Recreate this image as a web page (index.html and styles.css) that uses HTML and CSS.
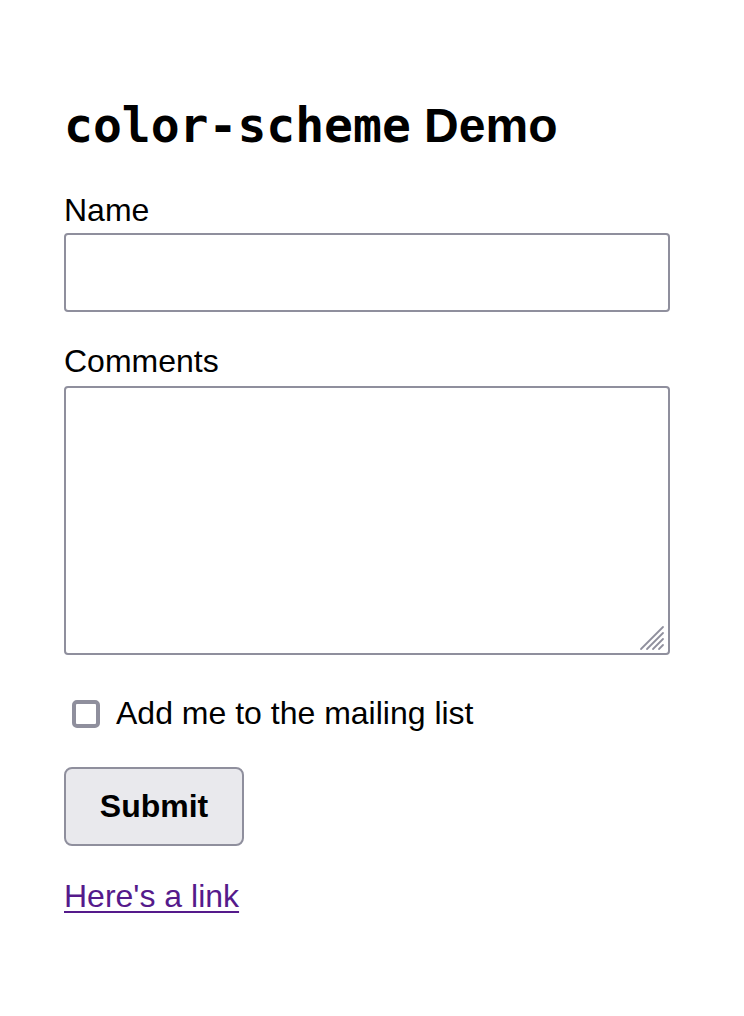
FILE: index.html
```html
<!DOCTYPE html>
<html lang="en">
<head>
<meta charset="utf-8">
<title>color-scheme Demo</title>
<link rel="stylesheet" href="styles.css">
</head>
<body>
<main class="page">
  <h1 class="title"><code class="code">color-scheme</code> Demo</h1>
  <form class="form">
    <label class="label label-name" for="name">Name</label>
    <input class="field" id="name" type="text">
    <label class="label label-comments" for="comments">Comments</label>
    <div class="area-wrap">
      <textarea class="area" id="comments"></textarea>
      <svg class="grip" width="28" height="28" viewBox="0 0 28 28" aria-hidden="true">
        <g stroke="#8f8f9d" stroke-width="1.8" stroke-linecap="round">
          <line x1="26" y1="4" x2="4" y2="26"/>
          <line x1="26" y1="10" x2="10" y2="26"/>
          <line x1="26" y1="16" x2="16" y2="26"/>
          <line x1="26" y1="22" x2="22" y2="26"/>
        </g>
      </svg>
    </div>
    <label class="check-row">
      <input class="check" type="checkbox">
      <span>Add me to the mailing list</span>
    </label>
    <button class="btn" type="button">Submit</button>
    <p class="link-row"><a class="link" href="#">Here's a link</a></p>
  </form>
</main>
</body>
</html>
```
FILE: styles.css
```css
html, body {
  margin: 0;
  padding: 0;
  background: #ffffff;
  color: #000000;
}
body {
  font-family: "Liberation Sans", Arial, sans-serif;
  font-size: 32px;
  line-height: 37px;
}
.page {
  width: 606px;
  padding-left: 64px;
}
.title {
  margin: 97px 0 0;
  font-size: 48px;
  line-height: 56px;
  font-weight: 700;
}
.code {
  font-family: "DejaVu Sans Mono", "Liberation Mono", monospace;
  font-size: 48px;
  font-weight: 700;
}
.form {
  display: flex;
  flex-direction: column;
}
.label {
  display: block;
}
.label-name {
  margin-top: 38px;
}
.field {
  box-sizing: border-box;
  width: 606px;
  height: 79px;
  margin: 4px 0 0;
  border: 2px solid #8f8f9d;
  border-radius: 4px;
  background: #ffffff;
  font: inherit;
  padding: 0 8px;
}
.label-comments {
  margin-top: 31px;
}
.area-wrap {
  position: relative;
  margin-top: 6px;
  width: 606px;
  height: 269px;
}
.area {
  box-sizing: border-box;
  display: block;
  width: 606px;
  height: 269px;
  margin: 0;
  border: 2px solid #8f8f9d;
  border-radius: 4px;
  background: #ffffff;
  resize: none;
  font: inherit;
}
.grip {
  position: absolute;
  right: 5px;
  bottom: 4px;
}
.check-row {
  display: flex;
  align-items: center;
  height: 37px;
  margin-top: 40px;
}
.check {
  appearance: none;
  -webkit-appearance: none;
  box-sizing: border-box;
  width: 28px;
  height: 28px;
  margin: 0 16px 0 8px;
  border: 4px solid #8f8f9d;
  border-radius: 5px;
  background: #ffffff;
}
.btn {
  box-sizing: border-box;
  align-self: flex-start;
  width: 180px;
  height: 79px;
  margin-top: 35px;
  padding: 0;
  border: 2px solid #8f8f9d;
  border-radius: 8px;
  background: #e9e9ed;
  color: #000000;
  font-family: "Liberation Sans", Arial, sans-serif;
  font-size: 32px;
  font-weight: 700;
}
.link-row {
  margin: 32px 0 0;
}
.link {
  color: #551a8b;
  text-decoration: underline;
  text-decoration-thickness: 2px;
  text-underline-offset: 4px;
}
```
